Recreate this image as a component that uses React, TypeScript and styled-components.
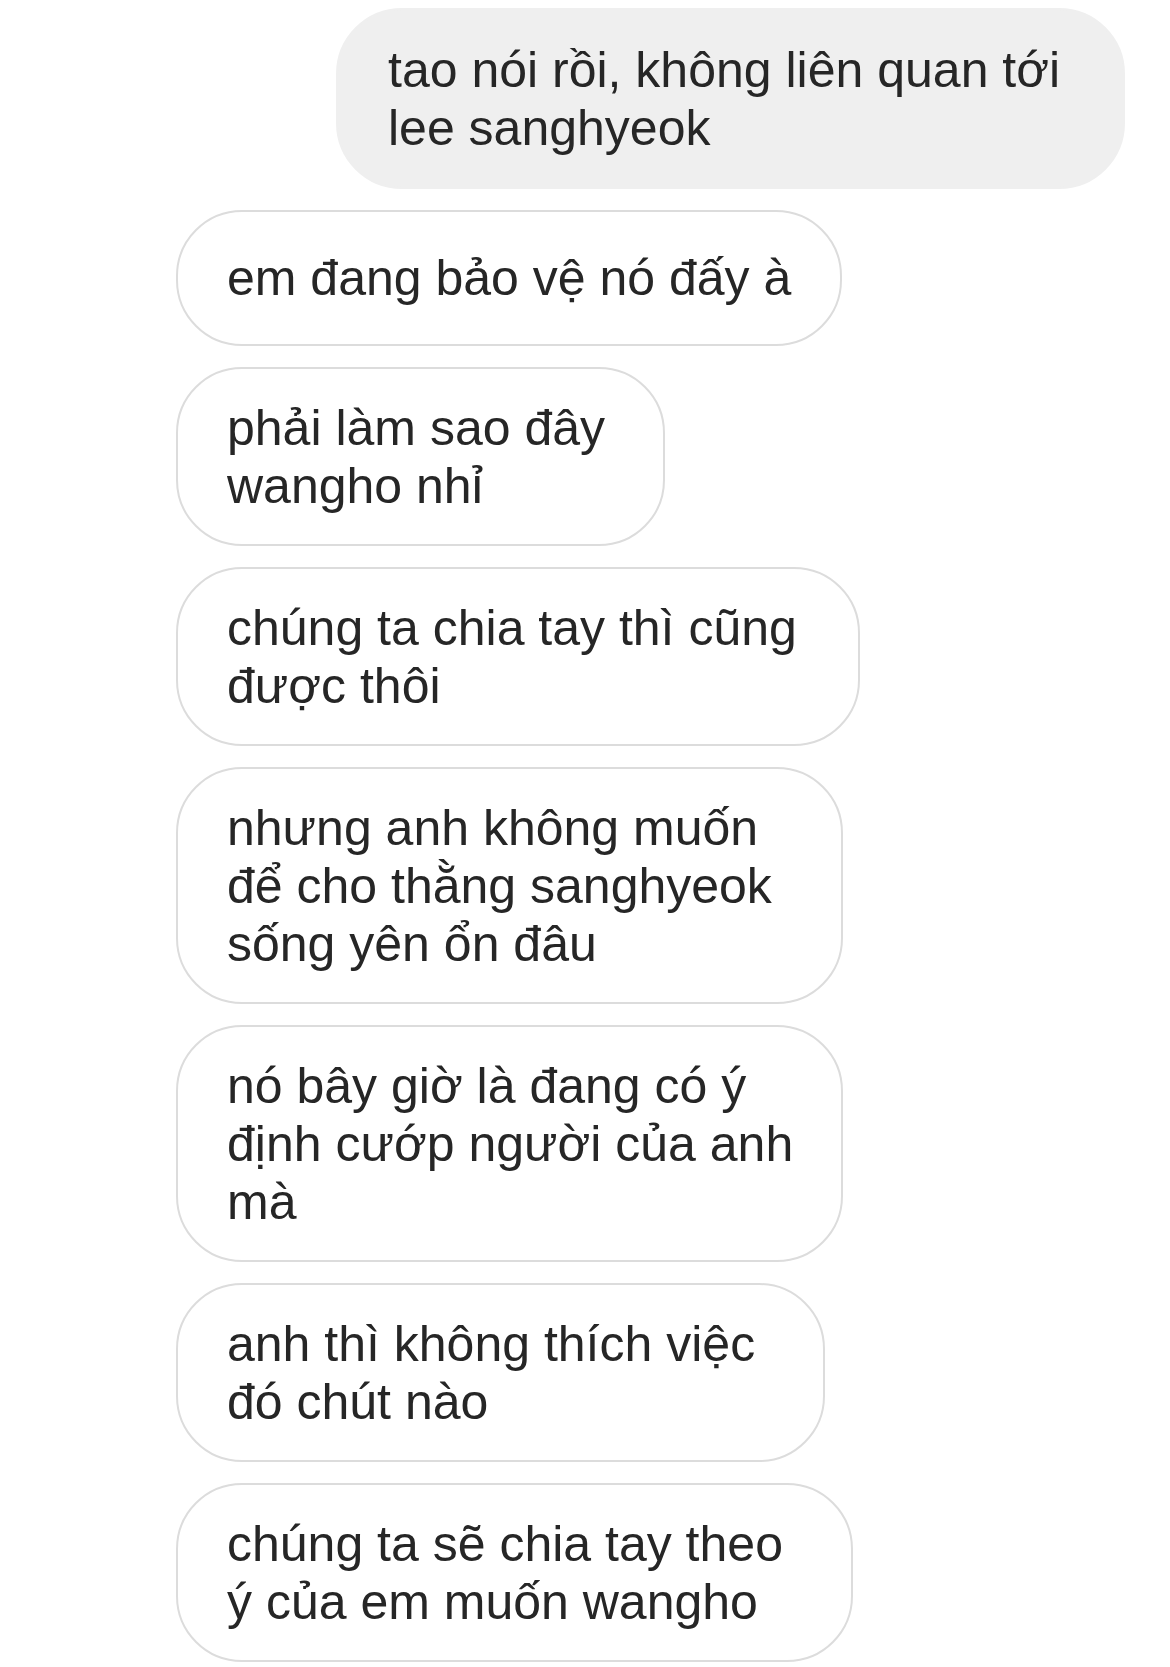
import React from 'react'
import styled, { createGlobalStyle } from 'styled-components'

const GlobalStyle = createGlobalStyle`
  html, body {
    margin: 0;
    padding: 0;
    background: #ffffff;
  }
  body {
    font-family: 'Liberation Sans', Arial, sans-serif;
    -webkit-font-smoothing: antialiased;
  }
`

type Message = {
  from: 'me' | 'them'
  width: number
  lines: string[]
}

const messages: Message[] = [
  { from: 'me', width: 789, lines: ['tao nói rồi, không liên quan tới', 'lee sanghyeok'] },
  { from: 'them', width: 666, lines: ['em đang bảo vệ nó đấy à'] },
  { from: 'them', width: 489, lines: ['phải làm sao đây', 'wangho nhỉ'] },
  { from: 'them', width: 684, lines: ['chúng ta chia tay thì cũng', 'được thôi'] },
  { from: 'them', width: 667, lines: ['nhưng anh không muốn', 'để cho thằng sanghyeok', 'sống yên ổn đâu'] },
  { from: 'them', width: 667, lines: ['nó bây giờ là đang có ý', 'định cướp người của anh', 'mà'] },
  { from: 'them', width: 649, lines: ['anh thì không thích việc', 'đó chút nào'] },
  { from: 'them', width: 677, lines: ['chúng ta sẽ chia tay theo', 'ý của em muốn wangho'] },
]

const Thread = styled.div`
  display: flex;
  flex-direction: column;
  gap: 21px;
  padding: 8px 45px 6px 176px;
  box-sizing: border-box;
  width: 1170px;
`

const Row = styled.div<{ $mine: boolean }>`
  display: flex;
  justify-content: ${p => (p.$mine ? 'flex-end' : 'flex-start')};
`

const Bubble = styled.div<{ $mine: boolean; $width: number }>`
  box-sizing: border-box;
  width: ${p => p.$width}px;
  min-height: 136px;
  display: flex;
  flex-direction: column;
  justify-content: center;
  padding: ${p => (p.$mine ? '30.5px 0 30.5px 50px' : '29.5px 0 29.5px 49px')};
  border-radius: 66px;
  background: ${p => (p.$mine ? '#efefef' : '#ffffff')};
  border: 2px solid ${p => (p.$mine ? '#efefef' : '#dcdcdc')};
  color: #262626;
  font-size: 50px;
  line-height: 58px;
  white-space: nowrap;
`

const Line = styled.span`
  display: block;
`

export default function App() {
  return (
    <>
      <GlobalStyle />
      <Thread>
        {messages.map((m, i) => (
          <Row key={i} $mine={m.from === 'me'}>
            <Bubble $mine={m.from === 'me'} $width={m.width}>
              {m.lines.map((l, j) => (
                <Line key={j}>{l}</Line>
              ))}
            </Bubble>
          </Row>
        ))}
      </Thread>
    </>
  )
}
